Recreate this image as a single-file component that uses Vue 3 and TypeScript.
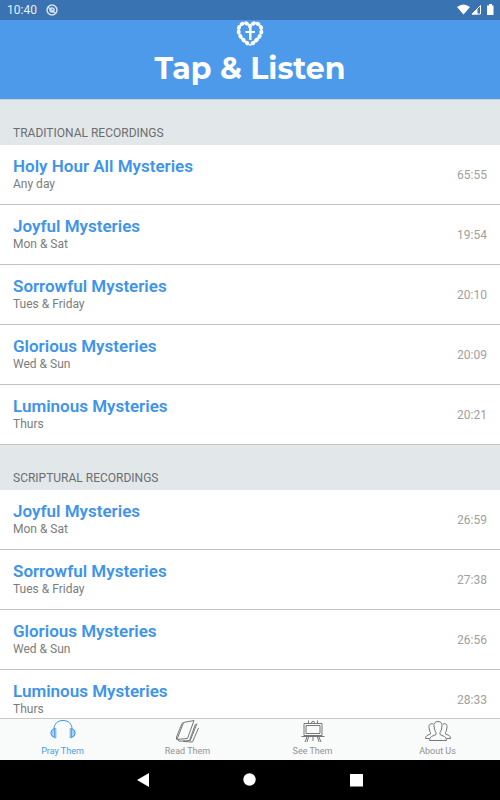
<script setup lang="ts">
import { ref } from 'vue'

interface Recording {
  title: string
  day: string
  length: string
}

interface Section {
  name: string
  recordings: Recording[]
}

const sections: Section[] = [
  {
    name: 'Traditional Recordings',
    recordings: [
      { title: 'Holy Hour All Mysteries', day: 'Any day', length: '65:55' },
      { title: 'Joyful Mysteries', day: 'Mon & Sat', length: '19:54' },
      { title: 'Sorrowful Mysteries', day: 'Tues & Friday', length: '20:10' },
      { title: 'Glorious Mysteries', day: 'Wed & Sun', length: '20:09' },
      { title: 'Luminous Mysteries', day: 'Thurs', length: '20:21' },
    ],
  },
  {
    name: 'Scriptural Recordings',
    recordings: [
      { title: 'Joyful Mysteries', day: 'Mon & Sat', length: '26:59' },
      { title: 'Sorrowful Mysteries', day: 'Tues & Friday', length: '27:38' },
      { title: 'Glorious Mysteries', day: 'Wed & Sun', length: '26:56' },
      { title: 'Luminous Mysteries', day: 'Thurs', length: '28:33' },
    ],
  },
]

const tabs = [
  { id: 'pray', label: 'Pray Them' },
  { id: 'read', label: 'Read Them' },
  { id: 'see', label: 'See Them' },
  { id: 'about', label: 'About Us' },
]
const activeTab = ref('pray')

// Beads of the rosary, laid out round a heart: x, y and turn of each
const beads: [number, number, number][] = [
  [13, 4, 90], [9.5, 1.5, 25], [5, 2, -25], [2, 5.5, -65], [1.7, 10, 85], [3.5, 14.5, 60], [6.5, 18, 45],
  [10, 21, 35], [16, 21, -35], [19.5, 18, -45], [22.5, 14.5, -60], [24.3, 10, -85], [24, 5.5, 65],
  [21, 2, 25], [16.5, 1.5, -25],
]
</script>

<template>
  <div class="app">
    <div class="status">
      <span class="clock">10:40</span>
      <svg class="sync" viewBox="0 0 12 12" width="12" height="12" aria-hidden="true">
        <circle cx="6" cy="6" r="5" />
        <circle cx="6" cy="6" r="2" />
        <path d="M2 3l7 6" />
      </svg>
      <svg class="signals" viewBox="0 0 38 12" width="38" height="12" aria-hidden="true">
        <path d="M0 3Q6.500 -2 13 3L6.500 10.500Z" />
        <path class="weak" d="M15 10L23.500 1.500V10Z" />
        <path d="M14.500 10.500L20.500 4.500V10.500Z" />
        <path d="M30 1.500h2V0h3V1.500h1.500v9.500h-6.500Z" />
      </svg>
    </div>

    <header class="header">
      <svg class="rosary" viewBox="0 0 26 26" width="26" height="26" aria-hidden="true">
        <ellipse
          v-for="([x, y, turn], i) in beads"
          :key="i"
          :cx="x"
          :cy="y"
          rx="2.500"
          ry="2"
          :transform="`rotate(${turn} ${x} ${y})`"
        />
        <path d="M12 6h2.500v3H18v2h-3.500v7H12v-7H8.500v-2H12Z" />
        <circle cx="13" cy="23" r="1" />
      </svg>
      <h1>Tap &amp; Listen</h1>
    </header>

    <main class="list">
      <section v-for="section in sections" :key="section.name">
        <h2>{{ section.name }}</h2>
        <button v-for="item in section.recordings" :key="item.title" type="button" class="row">
          <span class="text">
            <span class="title">{{ item.title }}</span>
            <span class="day">{{ item.day }}</span>
          </span>
          <span class="length">{{ item.length }}</span>
        </button>
      </section>
    </main>

    <nav class="tabs">
      <a
        v-for="tab in tabs"
        :key="tab.id"
        :href="`#${tab.id}`"
        :class="{ active: tab.id === activeTab }"
        @click.prevent="activeTab = tab.id"
      >
        <svg viewBox="0 0 26 24" width="26" height="24" aria-hidden="true">
          <g v-if="tab.id === 'pray'">
            <path d="M4 10C4 5 7.500 1.500 13 1.500S22 5 22 10" />
            <path class="pad" d="M4.500 9.500Q0.800 10.500 0.800 14T4.500 18.500ZM21.500 9.500Q25.200 10.500 25.200 14T21.500 18.500Z" />
            <path class="cup" d="M4.500 9.500H6V19H4.500ZM20 9.500h1.500V19H20Z" />
          </g>
          <g v-else-if="tab.id === 'read'">
            <path d="M8.500 3.500L19 1.500L12.500 19.500L2 20.500ZM8.500 3.500L7 4.500L1.500 18V20.500" />
            <path d="M20.500 5L14.500 21.500L4 22.200L3 20.500M23.500 9L17.500 23L8 22.500M22 4.500L15 22" />
          </g>
          <g v-else-if="tab.id === 'see'">
            <path d="M4 4.500H22V16.500H4ZM6 6.500H20V14.500H6ZM8.500 4V1.500M17.500 4V1.500M11.500 4L12 2.500H14L14.500 4" />
            <path d="M1.500 17.500H24.500M7 18L5 23M8.500 18L7 23M13 17V22M17.500 18L19 23M19 18L21 23" />
          </g>
          <g v-else>
            <path d="M13 2.500C10 2.500 8.500 4.500 9 7L9.500 10Q10 12.500 11 13.500V15.500L6.500 17.500Q4.500 18.500 4.500 21.500H21.500Q21.500 18.500 19.500 17.500L15 15.500V13.500Q16 12.500 16.500 10L17 7C17.500 4.500 16 2.500 13 2.500Z" />
            <path d="M8 5C5 4 3.500 6 4 8.500L4.500 11Q5 13 5.500 13.500V15L2 16.500Q0.500 17.500 0.500 19.500H4.500M18 5C21 4 22.500 6 22 8.500L21.500 11Q21 13 20.500 13.500V15L24 16.500Q25.500 17.500 25.500 19.500H21.500" />
          </g>
        </svg>
        <span>{{ tab.label }}</span>
      </a>
    </nav>

    <div class="system">
      <button type="button" aria-label="Back">
        <svg viewBox="0 0 14 14" width="14" height="14"><path d="M1 7L13 0V14Z" /></svg>
      </button>
      <button type="button" aria-label="Home">
        <svg viewBox="0 0 14 14" width="14" height="14"><circle cx="6.500" cy="6.500" r="6.200" /></svg>
      </button>
      <button type="button" aria-label="Recent apps">
        <svg viewBox="0 0 14 14" width="14" height="14"><path d="M0 1h13v12.500H0Z" /></svg>
      </button>
    </div>
  </div>
</template>

<style>
body {
  margin: 0;
}
</style>

<style scoped>
.app {
  display: flex;
  flex-direction: column;
  height: 100vh;
  background: #fff;
  font-family: Roboto, "Liberation Sans", sans-serif;
}

button {
  margin: 0;
  padding: 0;
  border: 0;
  background: none;
  font: inherit;
  cursor: pointer;
}

svg {
  display: block;
}

.status {
  display: flex;
  flex: none;
  align-items: center;
  gap: 9px;
  height: 20px;
  padding: 0 5px 0 7px;
  background: #3a73b1;
  color: #e8f0f8;
  fill: #fff;
}

.clock {
  font-size: 12px;
  line-height: 20px;
}

.sync {
  fill: none;
  stroke: #d5e2f0;
  stroke-width: 1.5;
}

.signals {
  margin-left: auto;
}

.weak {
  fill: none;
  stroke: #fff;
}

.header {
  display: flex;
  flex: none;
  flex-direction: column;
  align-items: center;
  gap: 1px;
  box-sizing: border-box;
  height: 80px;
  padding-top: 2px;
  border-bottom: 1px solid #c9d1d8;
  background: #4e9aea;
  color: #fff;
}

.rosary {
  fill: #fff;
  overflow: visible;
}

h1 {
  margin: 0;
  font-family: Montserrat, Inter, sans-serif;
  font-size: 30px;
  font-weight: 700;
  line-height: 40px;
}

.list {
  flex: 1;
  min-height: 0;
  overflow: hidden;
}

h2 {
  box-sizing: border-box;
  height: 45px;
  margin: 0;
  padding: 23px 13px 0;
  background: #e2e7ea;
  color: #6b6e70;
  font-size: 12px;
  font-weight: 400;
  line-height: 20px;
  text-transform: uppercase;
}

.row {
  display: flex;
  align-items: center;
  justify-content: space-between;
  box-sizing: border-box;
  width: 100%;
  height: 60px;
  padding: 0 13px;
  border-bottom: 1px solid #c3c3c3;
  text-align: left;
}

.text {
  display: flex;
  flex-direction: column;
  padding-bottom: 1px;
}

.title {
  color: #3e94ea;
  font-size: 17px;
  font-weight: 600;
  line-height: 20px;
}

.day {
  color: #7c7c7c;
  font-size: 12px;
  line-height: 16px;
}

.length {
  color: #a0a0a0;
  font-size: 12px;
}

.tabs {
  display: flex;
  flex: none;
  box-sizing: border-box;
  height: 42px;
  border-top: 1px solid #c8c8c8;
  background: #f9fafa;
}

.tabs a {
  display: flex;
  flex: 1;
  flex-direction: column;
  align-items: center;
  color: #929292;
  font-size: 9px;
  line-height: 16px;
  text-decoration: none;
}

.tabs .active {
  color: #4e9aea;
}

.tabs svg {
  fill: none;
  stroke: #777;
}

.tabs .active svg {
  stroke: #3e94ea;
}

.tabs .pad {
  fill: #a9cff6;
}

.tabs .cup {
  fill: #a9cff6;
  stroke-width: 0.5;
}

.system {
  display: flex;
  flex: none;
  align-items: center;
  justify-content: center;
  gap: 93px;
  height: 40px;
  background: #000;
  fill: #fff;
}
</style>
